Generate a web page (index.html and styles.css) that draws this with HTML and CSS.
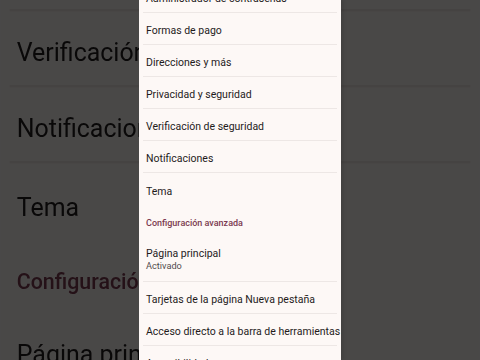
FILE: index.html
```html
<!DOCTYPE html>
<html lang="es">
<head>
<meta charset="utf-8">
<title>Configuración</title>
<link rel="stylesheet" href="styles.css">
</head>
<body>
<div class="stage">
  <div class="backdrop" aria-hidden="true">
    <div class="screen screen-big">
      <div class="list">
        <div class="row">Administrador de contraseñas</div>
        <div class="row">Formas de pago</div>
        <div class="row">Direcciones y más</div>
        <div class="row">Privacidad y seguridad</div>
        <div class="row">Verificación de seguridad</div>
        <div class="row">Notificaciones</div>
        <div class="row row-last">Tema</div>
        <div class="section">Configuración avanzada</div>
        <div class="row row-two"><span class="title">Página principal</span><span class="sub">Activado</span></div>
        <div class="row">Tarjetas de la página Nueva pestaña</div>
        <div class="row">Acceso directo a la barra de herramientas</div>
        <div class="row">Accesibilidad</div>
      </div>
    </div>
  </div>
  <div class="screen screen-main">
    <div class="list">
      <div class="row">Administrador de contraseñas</div>
      <div class="row">Formas de pago</div>
      <div class="row">Direcciones y más</div>
      <div class="row">Privacidad y seguridad</div>
      <div class="row">Verificación de seguridad</div>
      <div class="row">Notificaciones</div>
      <div class="row row-last">Tema</div>
      <div class="section">Configuración avanzada</div>
      <div class="row row-two"><span class="title">Página principal</span><span class="sub">Activado</span></div>
      <div class="row">Tarjetas de la página Nueva pestaña</div>
      <div class="row">Acceso directo a la barra de herramientas</div>
      <div class="row">Accesibilidad</div>
    </div>
  </div>
</div>
</body>
</html>
```
FILE: styles.css
```css
* { box-sizing: border-box; }
html, body { margin: 0; padding: 0; }
body {
  width: 480px;
  height: 360px;
  overflow: hidden;
  background: #4a4848;
  font-family: Roboto, "Noto Sans", sans-serif;
}
.stage {
  position: relative;
  width: 480px;
  height: 360px;
  display: flex;
  justify-content: center;
  overflow: hidden;
}
.backdrop {
  position: absolute;
  inset: 0;
  display: flex;
  justify-content: center;
  overflow: hidden;
}
.screen {
  width: 202px;
  height: 360px;
  flex: none;
  overflow: hidden;
  background: #fdf8f6;
}
.screen-big {
  transform-origin: 101px 180px;
  transform: scale(2.375);
  filter: brightness(0.29) blur(0.3px);
}
.screen-main {
  position: relative;
  box-shadow: 3px 0 3px rgba(0, 0, 0, 0.08);
}
.list {
  margin-top: -19px;
  padding: 0 4px;
}
.row {
  height: 32px;
  padding: 4px 3px 0;
  display: flex;
  align-items: center;
  border-bottom: 1px solid #ede7e5;
  font-size: 10.5px;
  color: #1f1b1c;
  white-space: nowrap;
}
.row-last { border-bottom: none; }
.section {
  height: 31px;
  padding: 4px 3px 0;
  display: flex;
  align-items: center;
  font-size: 9px;
  font-weight: 500;
  color: #7b3a50;
  white-space: nowrap;
}
.row-two {
  height: 46px;
  padding-top: 2px;
  flex-direction: column;
  align-items: flex-start;
  justify-content: center;
}
.row-two .title { line-height: 13px; }
.row-two .sub { font-size: 9.2px; color: #534c4d; line-height: 12px; }
```
